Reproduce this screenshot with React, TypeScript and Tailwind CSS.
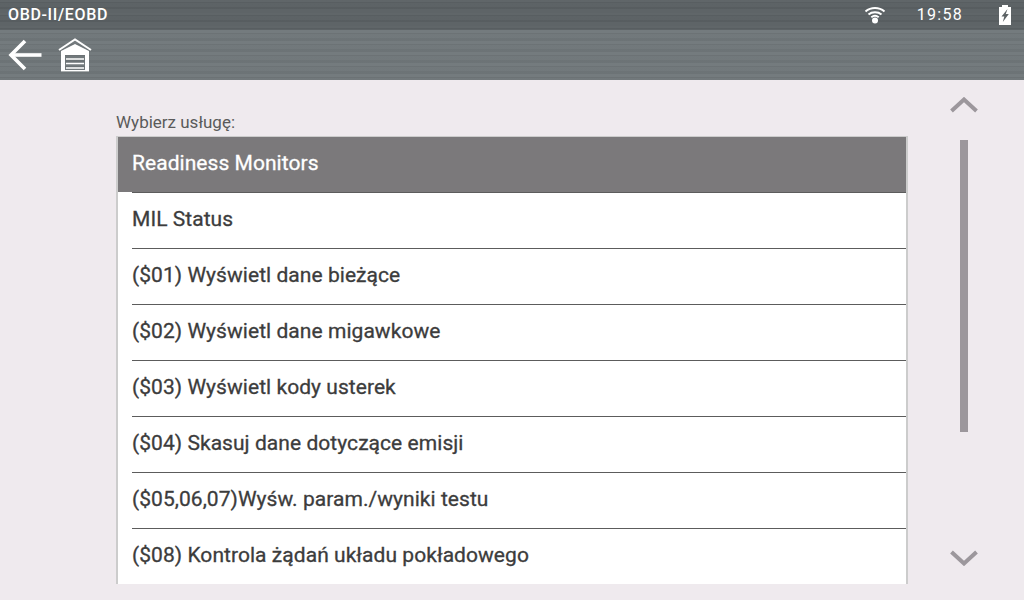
const items = [
  'Readiness Monitors',
  'MIL Status',
  '($01) Wyświetl dane bieżące',
  '($02) Wyświetl dane migawkowe',
  '($03) Wyświetl kody usterek',
  '($04) Skasuj dane dotyczące emisji',
  '($05,06,07)Wyśw. param./wyniki testu',
  '($08) Kontrola żądań układu pokładowego',
];

export default function App() {
  return (
    <div className="w-[1024px] h-[600px] overflow-hidden flex flex-col bg-[#efeaee] font-['Roboto',sans-serif]">
      {/* status bar */}
      <div className="h-[30px] shrink-0 flex items-center pl-2 pr-[13px] text-white bg-[#5b6164] bg-[repeating-linear-gradient(180deg,rgba(255,255,255,0.03)_0px,rgba(255,255,255,0.03)_2px,rgba(0,0,0,0.03)_2px,rgba(0,0,0,0.03)_3px,rgba(255,255,255,0.01)_3px,rgba(255,255,255,0.01)_7px,rgba(0,0,0,0.04)_7px,rgba(0,0,0,0.04)_9px,rgba(255,255,255,0.02)_9px,rgba(255,255,255,0.02)_13px)]">
        <span className="text-[16px] font-medium tracking-[0.65px]">OBD-II/EOBD</span>
        <svg className="ml-auto" width="22" height="18" viewBox="0 0 22 18" fill="none" stroke="white" strokeWidth="2">
          <path d="M1.5 5.5C7 0.8 15 0.8 20.5 5.5" />
          <path d="M4.5 8.5C8 5.5 14 5.5 17.5 8.5" />
          <path d="M7.3 11.2C9.5 9.5 12.5 9.5 14.7 11.2" />
          <circle cx="11" cy="14.5" r="3" fill="white" stroke="none" />
        </svg>
        <span className="ml-[31px] mr-[36px] text-[16px] tracking-[1.3px]">19:58</span>
        <svg width="12" height="20" viewBox="0 0 12 20">
          <path fillRule="evenodd" fill="white" d="M3 0H9V2H12V20H0V2H3ZM8.5 4L2.5 11.5H5.3L3.8 17L9.8 9H6.8Z" />
        </svg>
      </div>

      {/* toolbar */}
      <div className="h-[50px] shrink-0 flex items-center pl-2 gap-[16px] bg-[#70777a] bg-[repeating-linear-gradient(180deg,rgba(255,255,255,0.03)_0px,rgba(255,255,255,0.03)_3px,rgba(0,0,0,0.04)_3px,rgba(0,0,0,0.04)_4px,rgba(255,255,255,0.01)_4px,rgba(255,255,255,0.01)_8px,rgba(0,0,0,0.03)_8px,rgba(0,0,0,0.03)_11px)]">
        <svg width="34" height="32" viewBox="0 0 34 32" fill="none" stroke="white" strokeWidth="3.6">
          <path d="M33.5 16H3" />
          <path d="M17 2L3 16L17 30" />
        </svg>
        <svg width="34" height="34" viewBox="0 0 34 34" fill="none" stroke="white">
          <path d="M1 12L17 1.5L33 12" strokeWidth="2" />
          <path d="M3 13L17 6L31 13V33H27V17H7V33H3Z" fill="white" stroke="none" />
          <path d="M8 21H26M8 25.5H26M8 30H26" strokeWidth="1.6" />
          <path d="M3 32.7H31" strokeWidth="1.4" />
        </svg>
      </div>

      {/* content */}
      <div className="flex-1 flex min-h-0 pl-[116px]">
        <div className="w-[792px] shrink-0 pt-[33px]">
          <div className="h-[19px] leading-[19px] text-[17px] text-[#5a5a5a]">Wybierz usługę:</div>
          <div className="mt-[4px] h-[448px] overflow-hidden border-x-2 border-t border-[#cccccc] bg-white">
            {items.map((item, i) => (
              <div key={item} className={i === 0 ? 'h-[55px] mb-[1px] pl-[14px] bg-[#7b797b]' : 'h-[56px] pl-[14px]'}>
                <div
                  className={
                    i === 0
                      ? 'h-[56px] pb-[2px] flex items-center border-b border-[#5c5c5c] text-[21px] tracking-[0.05px] [-webkit-text-stroke:0.3px_#ffffff] text-white'
                      : 'h-[56px] pb-[2px] flex items-center border-b border-[#5c5c5c] text-[21px] tracking-[0.05px] [-webkit-text-stroke:0.3px_#3c3c3c] text-[#3c3c3c]'
                  }
                >
                  {item}
                </div>
              </div>
            ))}
          </div>
        </div>

        {/* scroll control */}
        <div className="w-[112px] flex flex-col items-center pt-[17px]">
          <svg width="28" height="16" viewBox="0 0 28 16" fill="none" stroke="#9c979c" strokeWidth="4">
            <path d="M1.5 14L14 2.5L26.5 14" />
          </svg>
          <div className="mt-[27px] w-[8px] h-[292px] bg-[#9c979c]" />
          <svg className="mt-[118px]" width="28" height="16" viewBox="0 0 28 16" fill="none" stroke="#9c979c" strokeWidth="4">
            <path d="M1.5 2L14 13.5L26.5 2" />
          </svg>
        </div>
      </div>
    </div>
  );
}
